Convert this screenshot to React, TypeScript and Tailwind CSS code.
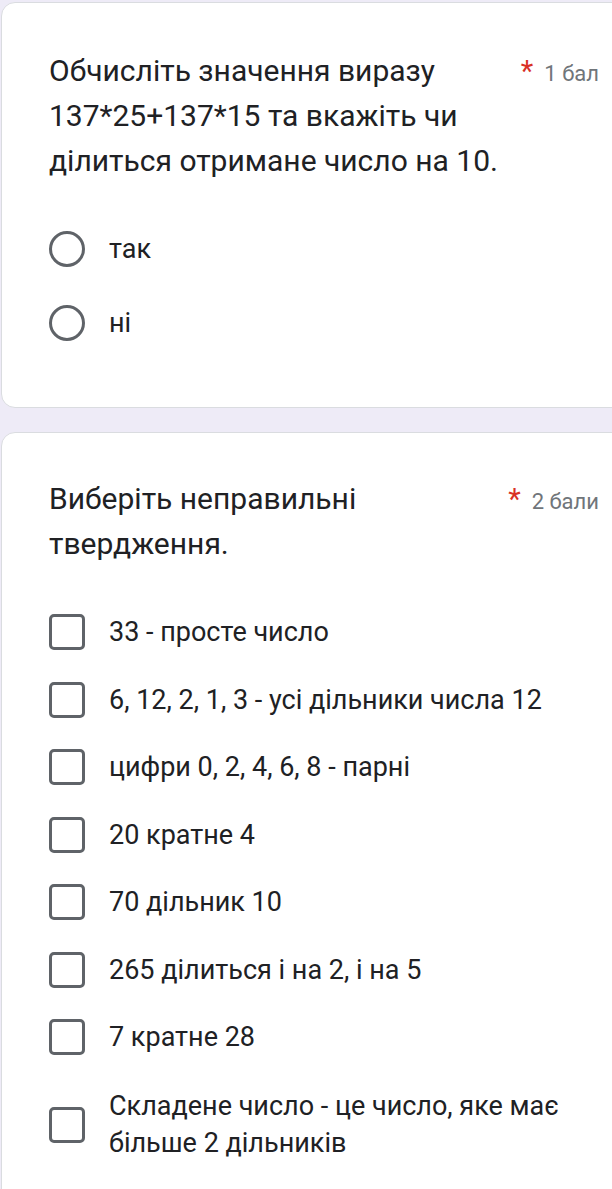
import { ReactNode } from "react";

const font = { fontFamily: "Roboto, 'Noto Sans', sans-serif" };

function Radio() {
  return <span className="block h-[36px] w-[36px] shrink-0 rounded-full border-[3px] border-[#5f6368]" />;
}

function Box() {
  return <span className="block h-[36px] w-[36px] shrink-0 rounded-[5px] border-[3px] border-[#5f6368]" />;
}

function Header({ title, points }: { title: ReactNode; points: string }) {
  return (
    <div className="flex items-start justify-between">
      <p className="max-w-[460px] text-[30px] leading-[45px] text-[#202124]">{title}</p>
      <p className="flex shrink-0 items-baseline gap-[11px] pt-[1px] text-[22px] leading-[45px] text-[#70757a]">
        <span className="text-[29px] text-[#d93025]">*</span>
        {points}
      </p>
    </div>
  );
}

const options = [
  "33 - просте число",
  "6, 12, 2, 1, 3 - усі дільники числа 12",
  "цифри 0, 2, 4, 6, 8 - парні",
  "20 кратне 4",
  "70 дільник 10",
  "265 ділиться і на 2, і на 5",
  "7 кратне 28",
];

export default function App() {
  return (
    <div className="h-[1189px] overflow-hidden bg-[#eeebf7] pt-[2px] pl-[1px]" style={font}>
      <section className="mr-[-40px] h-[406px] rounded-l-[14px] border border-[#dadce0] bg-white pr-[52px] pl-[47px] pt-[45px]">
        <Header title="Обчисліть значення виразу 137*25+137*15 та вкажіть чи ділиться отримане число на 10." points="1 бал" />
        <div className="mt-[48px] flex flex-col gap-[38px]">
          {["так", "ні"].map((o) => (
            <div key={o} className="flex items-center gap-[24px]">
              <Radio />
              <span className="text-[27px] leading-[36px] text-[#202124]">{o}</span>
            </div>
          ))}
        </div>
      </section>

      <section className="mt-[24px] mr-[-40px] h-[800px] rounded-l-[14px] border border-[#dadce0] bg-white pr-[52px] pl-[47px] pt-[43px]">
        <Header title={<>Виберіть неправильні<br />твердження.</>} points="2 бали" />
        <div className="mt-[48px] flex flex-col gap-[31.5px]">
          {options.map((o) => (
            <div key={o} className="flex items-center gap-[24px]">
              <Box />
              <span className="text-[27px] leading-[36px] text-[#202124]">{o}</span>
            </div>
          ))}
          <div className="flex items-center gap-[24px] pt-[1px]">
            <Box />
            <span className="text-[27px] leading-[37px] text-[#202124]">
              Складене число - це число, яке має
              <br />
              більше 2 дільників
            </span>
          </div>
        </div>
      </section>
    </div>
  );
}
